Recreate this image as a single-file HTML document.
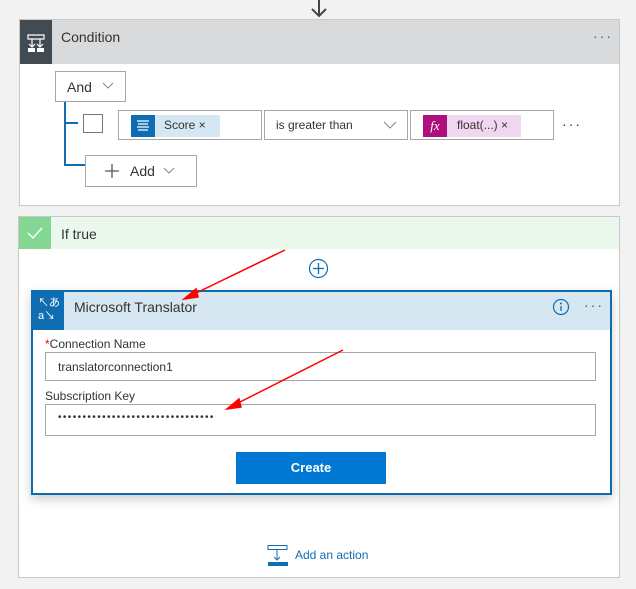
<!DOCTYPE html><html><head><style>
body{margin:0;width:636px;height:589px;background:#f2f2f2;font-family:"Liberation Sans",sans-serif;position:relative;overflow:hidden;color:#333}
.a{position:absolute;box-sizing:border-box}
.t{font-size:13px;color:#333}
.d{letter-spacing:2px}
</style></head><body>
<svg class="a" style="left:309px;top:0" width="20" height="18"><path d="M10 0V16M3 9L10 16L17 9" stroke="#444" stroke-width="2" fill="none"/></svg>
<div class="a" style="left:19px;top:19px;width:601px;height:187px;background:#fff;border:1px solid #c8c8c8"></div>
<div class="a" style="left:20px;top:20px;width:599px;height:44px;background:#d9dadb"></div>
<div class="a" style="left:20px;top:20px;width:32px;height:44px;background:#424a52"></div>
<svg class="a" style="left:26px;top:33px" width="20" height="20"><path d="M2 2H18V6H2ZM6 6V14M14 6V14M3 11L6 14L9 11M11 11L14 14L17 11" stroke="#fff" stroke-width="1.2" fill="none"/><rect x="2" y="15" width="7" height="4" fill="#fff"/><rect x="11" y="15" width="7" height="4" fill="#fff"/></svg>
<div class="a t" style="left:61px;top:29px;font-size:14px">Condition</div>
<div class="a d" style="left:593px;top:28px;color:#0f6db3;font-size:14px">···</div>
<div class="a" style="left:55px;top:71px;width:71px;height:31px;border:1px solid #a6a6a6"></div>
<div class="a t" style="left:67px;top:79px;font-size:14px">And</div>
<svg class="a" style="left:102px;top:82px" width="12" height="8"><path d="M1 1L6 6L11 1" stroke="#888" fill="none"/></svg>
<div class="a" style="left:64px;top:102px;width:2px;height:64px;background:#0f6db3"></div>
<div class="a" style="left:64px;top:122px;width:14px;height:2px;background:#0f6db3"></div>
<div class="a" style="left:64px;top:164px;width:22px;height:2px;background:#0f6db3"></div>
<div class="a" style="left:83px;top:114px;width:20px;height:19px;border:1px solid #777"></div>
<div class="a" style="left:118px;top:110px;width:144px;height:30px;border:1px solid #a6a6a6"></div>
<div class="a" style="left:131px;top:115px;width:89px;height:22px;background:#d4e7f2"></div>
<div class="a" style="left:131px;top:115px;width:24px;height:22px;background:#0f6db3"></div>
<svg class="a" style="left:135px;top:119px" width="16" height="14"><path d="M2 2H14M3 5H13M2 8H14M3 11H13" stroke="#fff" stroke-width="1.2"/></svg>
<div class="a t" style="left:164px;top:118px;font-size:12px">Score ×</div>
<div class="a" style="left:264px;top:110px;width:144px;height:30px;border:1px solid #a6a6a6"></div>
<div class="a t" style="left:276px;top:118px;font-size:12px">is greater than</div>
<svg class="a" style="left:383px;top:121px" width="14" height="8"><path d="M1 1L7 7L13 1" stroke="#888" fill="none"/></svg>
<div class="a" style="left:410px;top:110px;width:144px;height:30px;border:1px solid #a6a6a6"></div>
<div class="a" style="left:423px;top:115px;width:98px;height:22px;background:#f0d6ee"></div>
<div class="a" style="left:423px;top:115px;width:24px;height:22px;background:#b0107e;color:#fff;font-family:'Liberation Serif',serif;font-style:italic;font-size:13px;text-align:center;line-height:21px">fx</div>
<div class="a t" style="left:457px;top:118px;font-size:12px">float(...) ×</div>
<div class="a t d" style="left:562px;top:116px;font-size:14px">···</div>
<div class="a" style="left:85px;top:155px;width:112px;height:32px;border:1px solid #a6a6a6"></div>
<svg class="a" style="left:104px;top:163px" width="16" height="16"><path d="M8 1V15M1 8H15" stroke="#555" stroke-width="1.3"/></svg>
<div class="a t" style="left:130px;top:163px;font-size:14px">Add</div>
<svg class="a" style="left:163px;top:167px" width="12" height="8"><path d="M1 1L6 6L11 1" stroke="#888" fill="none"/></svg>
<div class="a" style="left:18px;top:216px;width:602px;height:362px;background:#fff;border:1px solid #c8c8c8"></div>
<div class="a" style="left:19px;top:217px;width:600px;height:32px;background:#ebf8ee"></div>
<div class="a" style="left:19px;top:217px;width:32px;height:32px;background:#84d894"></div>
<svg class="a" style="left:26px;top:225px" width="18" height="16"><path d="M2 8L7 13L16 3" stroke="#fff" stroke-width="1.4" fill="none"/></svg>
<div class="a t" style="left:61px;top:226px;font-size:14px">If true</div>
<svg class="a" style="left:308px;top:258px" width="21" height="21"><circle cx="10.5" cy="10.5" r="9" stroke="#0f6db3" stroke-width="1.2" fill="#fff"/><path d="M10.5 5V16M5 10.5H16" stroke="#0f6db3" stroke-width="1.3"/></svg>
<div class="a" style="left:31px;top:290px;width:581px;height:205px;background:#fff;border:2px solid #0d6bb0;box-shadow:0 4px 10px rgba(0,0,0,.2)"></div>
<div class="a" style="left:33px;top:292px;width:577px;height:38px;background:#d7e7f1"></div>
<div class="a" style="left:33px;top:292px;width:31px;height:38px;background:#0f6db3;color:#fff;font-size:11px;line-height:13px;padding:5px 0 0 5px;font-family:'Liberation Sans','Noto Sans CJK JP',sans-serif">↖あ<br>a↘</div>
<div class="a t" style="left:74px;top:299px;font-size:14px">Microsoft Translator</div>
<svg class="a" style="left:552px;top:298px" width="18" height="18"><circle cx="9" cy="9" r="7.5" stroke="#0f6db3" stroke-width="1.2" fill="none"/><path d="M9 8V13" stroke="#0f6db3" stroke-width="1.3"/><circle cx="9" cy="5.5" r="1" fill="#0f6db3"/></svg>
<div class="a d" style="left:584px;top:297px;color:#0f6db3;font-size:14px">···</div>
<div class="a t" style="left:45px;top:337px;font-size:12px"><span style="color:#e00">*</span>Connection Name</div>
<div class="a" style="left:45px;top:352px;width:551px;height:29px;border:1px solid #a6a6a6"></div>
<div class="a t" style="left:58px;top:360px;font-size:12px">translatorconnection1</div>
<div class="a t" style="left:45px;top:389px;font-size:12px">Subscription Key</div>
<div class="a" style="left:45px;top:404px;width:551px;height:32px;border:1px solid #a6a6a6"></div>
<div class="a t" style="left:58px;top:412px;font-size:10px;letter-spacing:1.4px">••••••••••••••••••••••••••••••••</div>
<div class="a" style="left:236px;top:452px;width:150px;height:32px;background:#0078d4;color:#fff;font-weight:bold;font-size:13px;text-align:center;line-height:32px">Create</div>
<svg class="a" style="left:267px;top:545px" width="22" height="21"><rect x="1" y="0.5" width="19" height="4" stroke="#0f6db3" fill="none"/><path d="M10 5V15M7 12L10 15L13 12" stroke="#0f6db3" fill="none"/><rect x="1" y="17" width="20" height="4" fill="#0f6db3"/></svg>
<div class="a" style="left:295px;top:548px;font-size:12px;color:#0f6db3">Add an action</div>
<svg class="a" style="left:0;top:0" width="636" height="589"><g stroke="#f00" stroke-width="1.5" fill="#f00"><path d="M285 250L192 295"/><path d="M184 299L196 289L198 297Z"/><path d="M343 350L236 404"/><path d="M227 409L239 399L241 407Z"/></g></svg>
</body></html>
